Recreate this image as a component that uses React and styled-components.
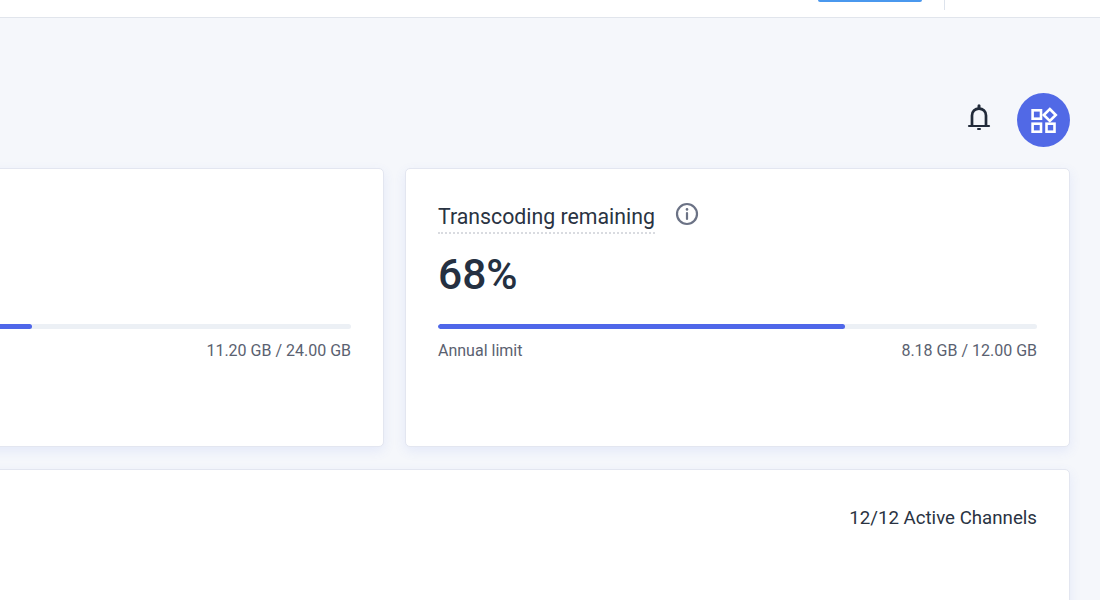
import React from 'react'
import styled, { createGlobalStyle } from 'styled-components'

const GlobalStyle = createGlobalStyle`
  html, body {
    margin: 0;
    padding: 0;
    background: #f5f7fb;
  }
  body {
    font-family: Roboto, "Liberation Sans", sans-serif;
    overflow: hidden;
  }
`

const Page = styled.div`
  width: 1100px;
  height: 600px;
  overflow: hidden;
  background: #f5f7fb;
  color: #222b3a;
`

const TopBar = styled.header`
  height: 17px;
  background: #fff;
  border-bottom: 1px solid #e1e5ec;
  display: flex;
  justify-content: flex-end;
  align-items: flex-start;
  padding-right: 155px;
  gap: 22px;
`

const UpgradeButton = styled.div`
  width: 104px;
  height: 2px;
  background: #4a98ee;
  border-radius: 0 0 4px 4px;
`

const TopDivider = styled.div`
  width: 1px;
  height: 10px;
  background: #dde3ec;
`

const Content = styled.main`
  padding: 75px 30px 0 0;
`

const Actions = styled.div`
  display: flex;
  justify-content: flex-end;
  align-items: center;
  gap: 25px;
  height: 54px;
  margin-bottom: 21px;
`

const BellButton = styled.div`
  width: 26px;
  height: 26px;
  margin-top: -6px;
  display: flex;
  align-items: center;
  justify-content: center;
`

const AppsButton = styled.div`
  width: 53px;
  height: 54px;
  border-radius: 50%;
  background: #5169e6;
  display: flex;
  align-items: center;
  justify-content: center;
`

const StatsGrid = styled.div`
  display: grid;
  grid-template-columns: 665px 665px;
  column-gap: 21px;
  margin-left: -281px;
`

const Card = styled.section`
  box-sizing: border-box;
  background: #fff;
  border: 1px solid #e3e6f0;
  border-radius: 5px;
  box-shadow: 0 4px 12px rgba(81, 105, 230, 0.1);
`

const StatCard = styled(Card)`
  height: 279px;
  padding: 0 32px;
  display: flex;
  flex-direction: column;
`

const TitleRow = styled.div`
  height: 66px;
  display: flex;
  align-items: flex-start;
  gap: 20px;
  padding-top: 34px;
  box-sizing: border-box;
`

const Title = styled.span`
  font-size: 21.3px;
  line-height: 30px;
  margin-top: -1px;
  height: 30px;
  color: #2a3342;
  border-bottom: 2px dotted #d9dbe0;
`

const InfoIcon = styled.span`
  display: flex;
  margin-top: -1px;
  color: #6b7285;
`

const Percent = styled.div`
  font-size: 42.5px;
  font-weight: 500;
  line-height: 44px;
  height: 44px;
  margin-top: 18px;
  color: #253041;
`

const Track = styled.div`
  height: 5px;
  margin-top: 27px;
  border-radius: 3px;
  background: #ecf0f5;
  overflow: hidden;
`

const Fill = styled.div`
  height: 100%;
  border-radius: 3px;
  background: #4f67e9;
`

const Meta = styled.div`
  display: flex;
  justify-content: space-between;
  margin-top: 11px;
  font-size: 16px;
  line-height: 22px;
  color: #5a6170;
`

const ChannelsCard = styled(Card)`
  height: 200px;
  margin-top: 22px;
  margin-left: -281px;
  padding: 36px 32px 0;
  text-align: right;
  font-size: 18.7px;
  line-height: 24px;
  color: #2a3342;
`

const BellIcon = () => (
  <svg width="26" height="26" viewBox="0 0 26 26" fill="none" stroke="#222b3a" strokeWidth="2.7" strokeLinecap="round">
    <path d="M6 21V11.5C6 7.5 9 4.6 13 4.6s7 2.9 7 6.9V21" />
    <path d="M3 22h20" strokeWidth="2.2" />
    <path d="M13 1.8v2" strokeWidth="3" />
    <path d="M12 25h2" strokeWidth="2" />
  </svg>
)

const AppsIcon = () => (
  <svg width="28" height="28" viewBox="0 0 28 28" fill="none" stroke="#fff" strokeWidth="2.6">
    <rect x="2.6" y="4.3" width="8.4" height="8.4" />
    <rect x="2.6" y="17.7" width="8.4" height="8" />
    <rect x="16.5" y="17.7" width="8" height="8" />
    <path d="M19.8 3l6 6-6 6-6-6z" />
  </svg>
)

const InfoGlyph = () => (
  <svg width="24" height="24" viewBox="0 0 24 24" fill="none" stroke="currentColor" strokeWidth="2.2" strokeLinecap="round">
    <circle cx="12" cy="12" r="10" />
    <path d="M12 11v6" />
    <path d="M12 7.2v.3" strokeWidth="2.6" />
  </svg>
)

export default function App() {
  return (
    <Page>
      <GlobalStyle />
      <TopBar>
        <UpgradeButton />
        <TopDivider />
      </TopBar>
      <Content>
        <Actions>
          <BellButton><BellIcon /></BellButton>
          <AppsButton><AppsIcon /></AppsButton>
        </Actions>
        <StatsGrid>
          <StatCard>
            <TitleRow />
            <Percent />
            <Track>
              <Fill style={{ width: '46.8%' }} />
            </Track>
            <Meta>
              <span />
              <span>11.20 GB / 24.00 GB</span>
            </Meta>
          </StatCard>
          <StatCard>
            <TitleRow>
              <Title>Transcoding remaining</Title>
              <InfoIcon><InfoGlyph /></InfoIcon>
            </TitleRow>
            <Percent>68%</Percent>
            <Track>
              <Fill style={{ width: '68%' }} />
            </Track>
            <Meta>
              <span>Annual limit</span>
              <span>8.18 GB / 12.00 GB</span>
            </Meta>
          </StatCard>
        </StatsGrid>
        <ChannelsCard>12/12 Active Channels</ChannelsCard>
      </Content>
    </Page>
  )
}
